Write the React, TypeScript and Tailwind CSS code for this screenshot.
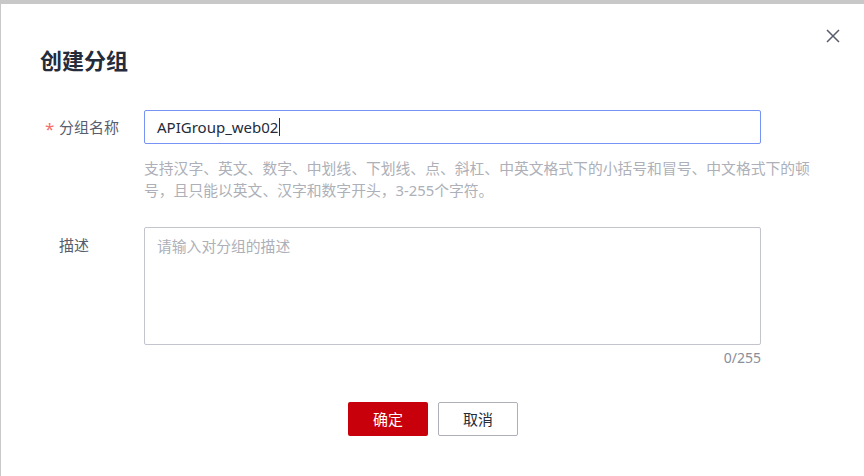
import React from "react";

const font = { fontFamily: '"Noto Sans", "Noto Sans CJK SC", sans-serif' };

export default function App() {
  return (
    <div className="w-[864px] h-[476px] bg-[#c8c8c8] pt-[4px] pl-[1px] overflow-hidden" style={font}>
      <div className="relative w-full h-full bg-white flex flex-col">
        {/* close button */}
        <button className="absolute left-[818px] top-[18px] w-[28px] h-[28px] flex items-center justify-center text-[#575d6c]">
          <svg width="14" height="14" viewBox="0 0 14 14" fill="none" stroke="currentColor" strokeWidth="1.5">
            <path d="M1 1 L13 13 M13 1 L1 13" />
          </svg>
        </button>

        <h1 className="ml-[39px] mt-[40px] text-[22px] leading-[32px] font-bold text-[#252b3a]">创建分组</h1>

        {/* group name */}
        <div className="mt-[34px] flex items-start">
          <div className="w-[143px] shrink-0 flex items-center h-[34px] pl-[44px] text-[15px] text-[#575d6c]">
            <span className="w-[14px] text-[#f66f6a] text-[17px] leading-none pt-[3px]">*</span>
            <span>分组名称</span>
          </div>
          <div className="flex flex-col">
            <div className="w-[617px] h-[34px] border border-[#7693f5] rounded-[2px] flex items-center pl-[12px] text-[15px] text-[#252b3a]">
              APIGroup_web02<span className="inline-block w-px h-[18px] bg-[#252b3a] ml-[1px]"></span>
            </div>
            <p className="mt-[13px] w-[680px] text-[14.8px] leading-[22px] text-[#adb0b8]">
              支持汉字、英文、数字、中划线、下划线、点、斜杠、中英文格式下的小括号和冒号、中文格式下的顿号，且只能以英文、汉字和数字开头，3-255个字符。
            </p>
          </div>
        </div>

        {/* description */}
        <div className="mt-[26px] flex items-start">
          <div className="w-[143px] shrink-0 flex items-center h-[36px] pl-[44px] text-[15px] text-[#575d6c]">
            <span className="w-[14px]"></span>
            <span>描述</span>
          </div>
          <div className="flex flex-col">
            <div className="w-[617px] h-[118px] border border-[#c2c5cc] rounded-[2px] px-[12px] pt-[7px] text-[14.8px] leading-[22px] text-[#adb0b8]">
              请输入对分组的描述
            </div>
            <div className="w-[617px] text-right mt-[2px] text-[14px] leading-[22px] text-[#8a8e99]">0/255</div>
          </div>
        </div>

        <div className="mt-[33px] flex justify-center gap-[10px] pl-[1px]">
          <button className="w-[80px] h-[34px] rounded-[2px] bg-[#c7000b] text-white text-[15px]">确定</button>
          <button className="w-[80px] h-[34px] rounded-[2px] border border-[#adb0b8] bg-white text-[#252b3a] text-[15px]">取消</button>
        </div>
      </div>
    </div>
  );
}
